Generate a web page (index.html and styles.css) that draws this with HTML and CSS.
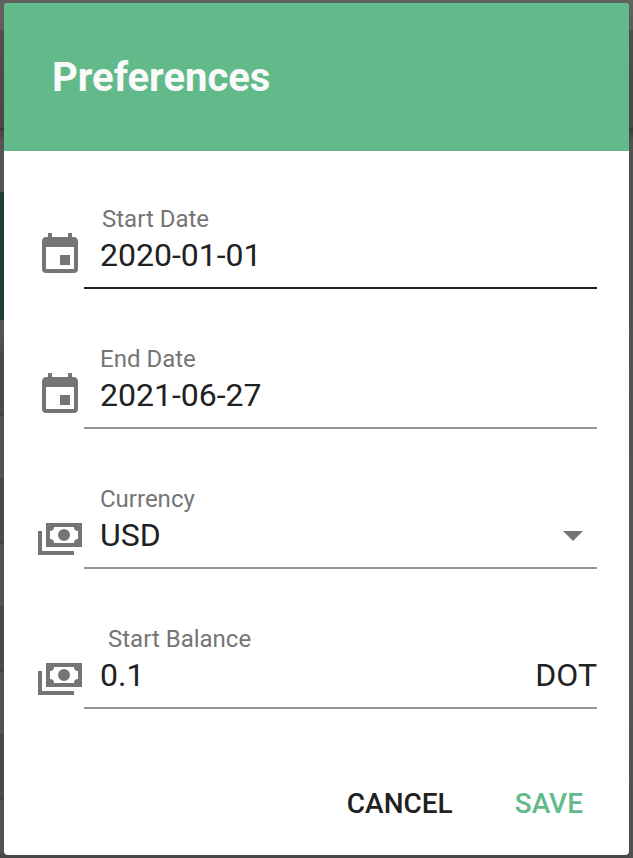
FILE: index.html
```html
<!DOCTYPE html>
<html lang="en">
<head>
<meta charset="utf-8">
<title>Preferences</title>
<link rel="stylesheet" href="styles.css">
</head>
<body>
<svg class="sprite" aria-hidden="true">
  <symbol id="calendar" viewBox="0 0 24 24"><path d="M19,19H5V8H19M16,1V3H8V1H6V3H5C3.89,3 3,3.89 3,5V19A2,2 0 0,0 5,21H19A2,2 0 0,0 21,19V5C21,3.89 20.1,3 19,3H18V1M17,12H12V17H17V12Z"/></symbol>
  <symbol id="cash" viewBox="0 0 24 24"><path d="M5,6H23V18H5V6M14,9A3,3 0 0,1 17,12A3,3 0 0,1 14,15A3,3 0 0,1 11,12A3,3 0 0,1 14,9M9,8A2,2 0 0,1 7,10V14A2,2 0 0,1 9,16H19A2,2 0 0,1 21,14V10A2,2 0 0,1 19,8H9M1,10H3V20H19V22H1V10Z"/></symbol>
</svg>
<main class="dialog">
  <header class="header"><h1 class="title">Preferences</h1></header>
  <form class="fields">
    <div class="row">
      <svg class="icon"><use href="#calendar"/></svg>
      <div class="field active"><span class="label start-date">Start Date</span><div class="value"><span>2020-01-01</span></div></div>
    </div>
    <div class="row">
      <svg class="icon"><use href="#calendar"/></svg>
      <div class="field"><span class="label">End Date</span><div class="value"><span>2021-06-27</span></div></div>
    </div>
    <div class="row">
      <svg class="icon"><use href="#cash"/></svg>
      <div class="field"><span class="label">Currency</span><div class="value"><span>USD</span><svg class="arrow" viewBox="0 0 20 10"><path d="M0 0h20L10 10z"/></svg></div></div>
    </div>
    <div class="row">
      <svg class="icon"><use href="#cash"/></svg>
      <div class="field"><span class="label start-balance">Start Balance</span><div class="value"><span>0.1</span><span>DOT</span></div></div>
    </div>
  </form>
  <footer class="actions">
    <button class="button" type="button">CANCEL</button>
    <button class="button save" type="button">SAVE</button>
  </footer>
</main>
</body>
</html>
```
FILE: styles.css
```css
* { box-sizing: border-box; }

body {
  margin: 0;
  height: 858px;
  padding: 3px 4px;
  overflow: hidden;
  font-family: Roboto, "Liberation Sans", sans-serif;
  color: #212121;
  background:
    linear-gradient(#1f3f2e, #1f3f2e) 0 192px / 4px 128px no-repeat,
    linear-gradient(#5f5f5f 0 30px, #4f4f4f 30px, #484848 127px, #3a3a3a 128px 130px, #464646 130px, #555452 142px, #555452 340px, #4a4945 355px 414px, #41403c 414px 416px, #54534f 416px 478px, #4a4945 478px 542px, #41403c 542px 544px, #54534f 544px 606px, #4a4945 606px 670px, #41403c 670px 672px, #54534f 672px 734px, #4a4945 734px 798px, #41403c 798px 800px, #54534f 800px 852px, #484848 855px) 0 0 / 4px 100% no-repeat,
    linear-gradient(#626262 0, #5b5b5b 30px, #4d4d4d 30px, #484848 127px, #3a3a3a 128px 130px, #505050 140px, #565656 650px, #505050 858px) 100% 0 / 4px 100% no-repeat,
    linear-gradient(#5f5f5f 50%, #484848 50%);
}

.sprite { position: absolute; width: 0; height: 0; }

.dialog {
  width: 625px;
  height: 852px;
  display: flex;
  flex-direction: column;
  background: #fff;
  border-radius: 4px;
  overflow: hidden;
}

.header {
  height: 148px;
  padding: 2px 48px 0;
  display: flex;
  align-items: center;
  background: #62ba8a;
}

.title {
  margin: 0;
  font-size: 40px;
  line-height: 64px;
  font-weight: 700;
  color: #fafafa;
}

.fields {
  padding: 50px 32px 0;
  display: flex;
  flex-direction: column;
  gap: 52px;
}

.row { height: 88px; display: flex; }

.icon {
  width: 48px;
  height: 48px;
  margin-top: 30px;
  flex: none;
  fill: #757575;
}

.field {
  flex: 1;
  display: flex;
  flex-direction: column;
  border-bottom: 2px solid #949494;
}

.field.active { border-color: #212121; }

.label {
  height: 36px;
  padding-left: 16px;
  font-size: 24px;
  line-height: 36px;
  color: #757575;
}

.start-date { padding-left: 18px; }
.start-balance { padding-left: 24px; }

.value {
  display: flex;
  align-items: center;
  justify-content: space-between;
  height: 36px;
  padding-left: 16px;
  font-size: 32px;
  line-height: 36px;
}

.arrow { width: 20px; height: 10px; margin: 2px 14px 0 0; fill: #757575; }

.actions {
  margin: 59px 46px 0 0;
  display: flex;
  justify-content: flex-end;
  gap: 62px;
}

.button {
  height: 72px;
  padding: 0;
  border: 0;
  background: none;
  font: 500 28px/72px Roboto, "Liberation Sans", sans-serif;
  color: #212121;
}

.save { color: #62ba8a; }
```
